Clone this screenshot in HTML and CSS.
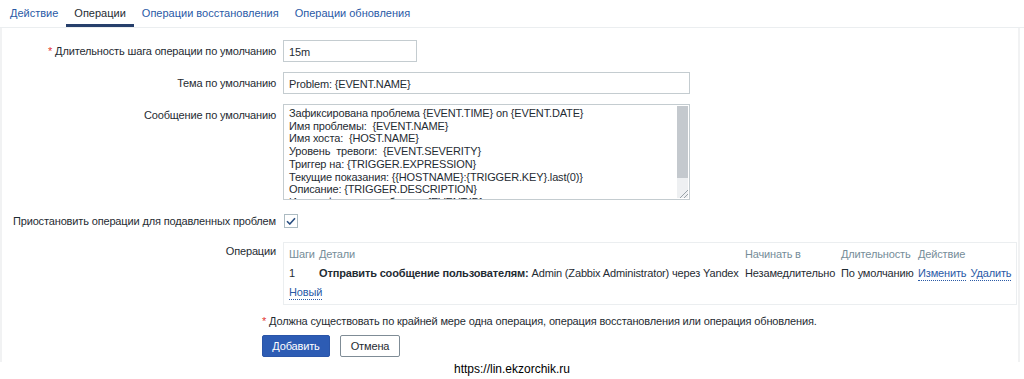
FILE: index.html
```html
<!DOCTYPE html>
<html lang="ru">
<head>
<meta charset="utf-8">
<link rel="stylesheet" href="styles.css">
</head>
<body>
<div class="page">
  <ul class="tabs">
    <li class="tab">Действие</li>
    <li class="tab active">Операции</li>
    <li class="tab">Операции восстановления</li>
    <li class="tab">Операции обновления</li>
  </ul>
  <div class="panel">
    <div class="form">
      <div class="label"><span class="req">*</span> Длительность шага операции по умолчанию</div>
      <div class="field"><div class="input short">15m</div></div>

      <div class="label">Тема по умолчанию</div>
      <div class="field"><div class="input wide">Problem: {EVENT.NAME}</div></div>

      <div class="label">Сообщение по умолчанию</div>
      <div class="field">
        <div class="textarea"><div class="ta-text">Зафиксирована проблема {EVENT.TIME} on {EVENT.DATE}
Имя проблемы:  {EVENT.NAME}
Имя хоста:  {HOST.NAME}
Уровень  тревоги:  {EVENT.SEVERITY}
Триггер на: {TRIGGER.EXPRESSION}
Текущие показания: {{HOSTNAME}:{TRIGGER.KEY}.last(0)}
Описание: {TRIGGER.DESCRIPTION}
Идентификатор проблемы: {EVENT.ID}</div><div class="scroll"><div class="thumb"></div><div class="grip"></div></div></div>
      </div>

      <div class="label check-label">Приостановить операции для подавленных проблем</div>
      <div class="field check-field">
        <span class="checkbox"><svg width="10" height="8" viewBox="0 0 10 8"><path d="M1 4.2 L3.8 7 L9 1.2" fill="none" stroke="#2a4f82" stroke-width="1.6"/></svg></span>
      </div>

      <div class="label ops-label">Операции</div>
      <div class="field">
        <div class="ops">
          <table class="ops-table">
            <colgroup><col class="c1"><col class="c2"><col class="c3"><col class="c4"><col class="c5"></colgroup>
            <thead>
              <tr><th>Шаги</th><th>Детали</th><th>Начинать в</th><th>Длительность</th><th>Действие</th></tr>
            </thead>
            <tbody>
              <tr>
                <td>1</td>
                <td><b>Отправить сообщение пользователям:</b> Admin (Zabbix Administrator) через Yandex</td>
                <td>Незамедлительно</td>
                <td>По умолчанию</td>
                <td><a class="link">Изменить</a><a class="link gap">Удалить</a></td>
              </tr>
            </tbody>
          </table>
          <div class="new-row"><a class="link new">Новый</a></div>
        </div>
      </div>
    </div>
    <div class="footer-area">
      <div class="note"><span class="req">*</span> Должна существовать по крайней мере одна операция, операция восстановления или операция обновления.</div>
      <div class="buttons">
        <button class="btn primary">Добавить</button>
        <button class="btn secondary">Отмена</button>
      </div>
    </div>
  </div>
  <div class="credit">https://lin.ekzorchik.ru</div>
</div>
</body>
</html>
```

FILE: styles.css
```css
* { box-sizing: border-box; }
html, body { margin: 0; padding: 0; background: #fff; }
body {
  font-family: "Liberation Sans", Arial, sans-serif;
  font-size: 11px;
  letter-spacing: -0.15px;
  color: #1f2c33;
}
.page { width: 1024px; }
.tabs {
  list-style: none;
  margin: 0;
  padding: 0 0 0 2px;
  height: 28px;
  display: flex;
  border-bottom: 1px solid #ebeef0;
}
.tab {
  padding: 6px 8px 0 8px;
  color: #2a5aa6;
  line-height: 14px;
  height: 27px;
  font-size: 11px;
  letter-spacing: 0;
}
.tab.active {
  color: #1f2c33;
  border-bottom: 3px solid #263f6b;
}
.panel {
  border-left: 2px solid #f1f2f3;
  border-right: 2px solid #f1f2f3;
  margin-right: 4px;
  padding: 12px 0 5px 0;
}
.form {
  display: grid;
  grid-template-columns: 281px 1fr;
  row-gap: 10px;
}
.label {
  text-align: right;
  padding-right: 7px;
  line-height: 14px;
  padding-top: 4px;
  white-space: nowrap;
}
.req { color: #e33734; }
.input {
  height: 22px;
  border: 1px solid #c4ccd0;
  padding: 4px 5px 3px;
  line-height: 14px;
  background: #fff;
}
.short { width: 134px; }
.wide { width: 407px; }
.textarea {
  width: 407px;
  height: 96px;
  border: 1px solid #c4ccd0;
  position: relative;
  overflow: hidden;
}
.ta-text {
  white-space: pre;
  padding: 2px 5px;
  line-height: 12.7px;
}
.scroll {
  position: absolute;
  right: 1px;
  top: 1px;
  bottom: 1px;
  width: 11px;
  background: #eef0f2;
}
.thumb {
  height: 72px;
  background: #c4c9ce;
}
.grip {
  position: absolute;
  right: 0;
  bottom: 0;
  width: 8px;
  height: 8px;
  background: linear-gradient(135deg, transparent 45%, #9aa3a9 46%, #9aa3a9 54%, transparent 55%, transparent 70%, #9aa3a9 71%, #9aa3a9 79%, transparent 80%);
}
.check-label { padding-top: 4px; }
.check-field { padding-top: 4px; }
.checkbox {
  display: inline-flex;
  align-items: center;
  justify-content: center;
  width: 14px;
  height: 14px;
  border: 1px solid #acbbc2;
  margin-left: 1px;
  background: #fff;
}
.ops-label { padding-top: 5px; margin-top: 1px; }
.ops {
  margin-top: 4px;
  width: 734px;
  border: 1px solid #ebeef0;
  padding: 2px 0 2px 5px;
}
.ops-table {
  border-collapse: collapse;
  table-layout: fixed;
  width: 727px;
}
.c1 { width: 30px; }
.c2 { width: 426px; }
.c3 { width: 96px; }
.c4 { width: 77px; }
.ops-table th, .ops-table td {
  padding: 0;
  height: 19px;
  line-height: 19px;
  text-align: left;
  white-space: nowrap;
  font-weight: normal;
  vertical-align: middle;
}
.ops-table th { color: #768d99; }
.ops-table b { font-weight: bold; }
.link {
  color: #2a5aa6;
  border-bottom: 1px dotted #2a5aa6;
  text-decoration: none;
  cursor: pointer;
  line-height: 13px;
  display: inline-block;
}
.gap { margin-left: 4px; }
.new-row { height: 19px; line-height: 19px; }
.footer-area { padding-left: 260px; padding-top: 9px; }
.note { line-height: 14px; }
.buttons { display: flex; gap: 10px; margin-top: 7px; }
.btn {
  font-family: "Liberation Sans", Arial, sans-serif;
  font-size: 11px;
  letter-spacing: -0.15px;
  height: 22px;
  padding: 0 8px;
  border-radius: 2px;
  line-height: 20px;
}
.primary {
  background: #2d5cb4;
  border: 1px solid #2a55a8;
  color: #fff;
  width: 68px;
}
.secondary {
  background: #fff;
  border: 1px solid #7f8c96;
  color: #1f2c33;
  width: 60px;
}
.credit {
  text-align: center;
  color: #000;
  font-size: 12px;
  letter-spacing: 0;
  line-height: 14px;
}
```
